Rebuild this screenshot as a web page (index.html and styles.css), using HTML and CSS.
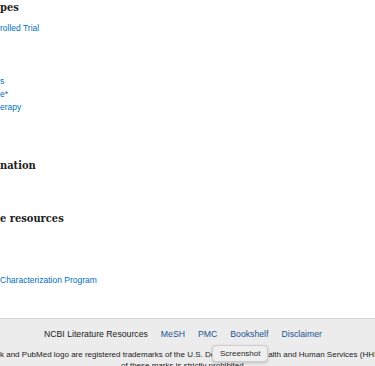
FILE: index.html
```html
<!DOCTYPE html>
<html lang="en">

<head>
  <meta charset="UTF-8">
  <meta name="viewport" content="width=device-width, initial-scale=1.0">
  <title>PubMed Article</title>
  <link rel="stylesheet" href="styles.css">
</head>

<body>
  <div class="page">
    <div class="section">
      <h2 class="section-title">pes</h2>
      <a class="term first" href="#">rolled Trial</a>
    </div>

    <div class="section terms">
      <a class="term" href="#">s</a>
      <a class="term" href="#">e*</a>
      <a class="term" href="#">erapy</a>
    </div>

    <div class="section">
      <h2 class="section-title info">nation</h2>
    </div>

    <div class="section">
      <h2 class="section-title linkout">e resources</h2>
      <a class="term program" href="#">Characterization Program</a>
    </div>
  </div>

  <footer class="footer">
    <nav class="footer-nav">
      <span class="footer-label">NCBI Literature Resources</span>
      <a href="#">MeSH</a>
      <a href="#">PMC</a>
      <a href="#">Bookshelf</a>
      <a href="#">Disclaimer</a>
    </nav>
    <p class="trademark">k and PubMed logo are registered trademarks of the U.S. Department of Health and Human Services (HHS). Unauthorized use</p>
    <p class="trademark second">of these marks is strictly prohibited.</p>
  </footer>

  <div class="tooltip">Screenshot</div>
</body>

</html>
```

FILE: styles.css
```css
body {
  margin: 0;
  font-family: 'Liberation Sans', Arial, sans-serif;
  color: #212121;
  background-color: #fff;
  overflow: hidden;
  position: relative;
  height: 366px;
}

.page {
  display: flex;
  flex-direction: column;
}

.section {
  display: flex;
  flex-direction: column;
  align-items: flex-start;
}

.section-title {
  margin: 0;
  font-family: 'DejaVu Serif Condensed', 'DejaVu Serif', Georgia, serif;
  font-stretch: condensed;
  font-size: 11px;
  font-weight: bold;
  line-height: 16px;
  color: #212121;
}

.term {
  display: block;
  font-size: 8.5px;
  line-height: 13px;
  color: #0071bc;
  text-decoration: none;
}

.term.first {
  margin-top: 6px;
}

.terms {
  margin-top: 40px;
}

.section-title.info {
  margin-top: 44px;
}

.section-title.linkout {
  margin-top: 37px;
}

.term.program {
  margin-top: 47px;
}

.footer {
  margin-top: 31px;
  border-top: 1px solid #d6d6d6;
  background-color: #ececec;
  padding-top: 9px;
  height: 60px;
}

.footer-nav {
  display: flex;
  justify-content: center;
  gap: 13px;
  font-size: 8.7px;
  line-height: 13px;
  padding-right: 9px;
}

.footer-nav a {
  color: #205493;
  text-decoration: none;
}

.trademark {
  margin: 8px 0 0;
  font-size: 8px;
  line-height: 11px;
  white-space: nowrap;
  overflow: hidden;
}

.trademark.second {
  margin: 0;
  text-align: center;
  padding-right: 8px;
}

/* macOS style tooltip floating over the footer */
.tooltip {
  position: absolute;
  left: 212px;
  top: 345px;
  padding: 1px 7px;
  font-size: 8px;
  line-height: 13px;
  color: #2a2a2a;
  background-color: #efefef;
  border: 1px solid #cfcfcf;
  border-radius: 4px;
  box-shadow: 0 1px 3px rgba(0, 0, 0, 0.2);
}
```
